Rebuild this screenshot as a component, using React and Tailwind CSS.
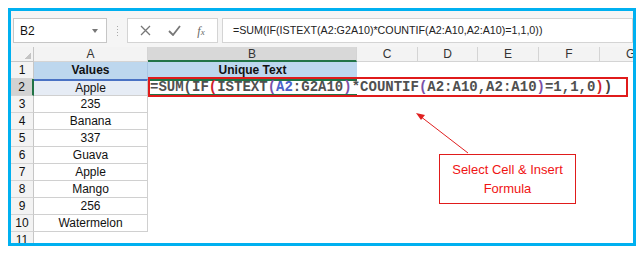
import React from 'react'

const cols = [
  { name: 'A', w: 'w-[114px]' },
  { name: 'B', w: 'w-[209px]' },
  { name: 'C', w: 'w-[61px]' },
  { name: 'D', w: 'w-[60px]' },
  { name: 'E', w: 'w-[61px]' },
  { name: 'F', w: 'w-[61px]' },
]

const values = ['235', 'Banana', '337', 'Guava', 'Apple', 'Mango', '256', 'Watermelon']

const RowHead = ({ n, active }) => (
  <div
    className={`w-[23px] shrink-0 text-center text-[12px] leading-[16px] border-b border-[#d4d4d4] ${active ? 'bg-[#d2d2d2] border-r-2 border-r-[#217346]' : 'bg-[#f3f3f3] border-r border-r-[#c6c6c6]'}`}
  >
    {n}
  </div>
)

// coloured parts of the formula being typed in B2
const formula = [
  ['=SUM(IF', 'text-[#505050]'],
  ['(', 'text-[#d0202a]'],
  ['ISTEXT', 'text-[#505050]'],
  ['(', 'text-[#7a4fa8]'],
  ['A2', 'text-[#4b62c8]'],
  [':G2A10', 'text-[#505050]'],
  [')', 'text-[#7a4fa8]'],
  ['*COUNTIF', 'text-[#505050]'],
  ['(', 'text-[#7a4fa8]'],
  ['A2:A10,A2:A10', 'text-[#505050]'],
  [')', 'text-[#7a4fa8]'],
  ['=1,1,0', 'text-[#505050]'],
  [')', 'text-[#d0202a]'],
  [')', 'text-[#404040]'],
]

export default function App() {
  return (
    <div className="w-[644px] h-[256px] bg-white p-2 font-['Liberation_Sans',Arial,sans-serif] text-[#111]">
      <div className="relative w-[628px] h-[238px] border-[3px] border-[#00b0f0] bg-white overflow-hidden flex flex-col">
        {/* Formula bar */}
        <div className="h-[36px] shrink-0 bg-[#f5f5f5] flex items-start pt-[7px] pl-[2px]">
          <div className="w-[94px] h-[25px] bg-white border border-[#c6c6c6] flex items-center justify-between pl-[6px] pr-[8px]">
            <span className="text-[12px]">B2</span>
            <span className="w-0 h-0 border-l-[3px] border-r-[3px] border-t-[4px] border-l-transparent border-r-transparent border-t-[#777]"></span>
          </div>
          <div className="w-[20px] h-[25px] flex flex-col items-center justify-center gap-[2px]">
            <span className="w-[1px] h-[1px] bg-[#aaa]"></span>
            <span className="w-[1px] h-[1px] bg-[#aaa]"></span>
            <span className="w-[1px] h-[1px] bg-[#aaa]"></span>
            <span className="w-[1px] h-[1px] bg-[#aaa]"></span>
          </div>
          <div className="w-[91px] h-[25px] bg-white border border-[#d4d4d4] flex items-center justify-around px-[4px]">
            <svg width="11" height="11" viewBox="0 0 11 11"><path d="M1 1 L10 10 M10 1 L1 10" stroke="#777" strokeWidth="1.3" /></svg>
            <svg width="13" height="11" viewBox="0 0 13 11"><path d="M1 6 L5 10 L12 1" stroke="#777" strokeWidth="1.8" fill="none" /></svg>
            <span className="text-[12px] italic text-[#666] font-['Liberation_Serif',serif]">f<span className="text-[9px]">x</span></span>
          </div>
          <div className="ml-[4px] flex-1 h-[25px] bg-white border border-[#d4d4d4] flex items-center pl-[10px] text-[10.7px] text-[#222] whitespace-nowrap">
            =SUM(IF(ISTEXT(A2:G2A10)*COUNTIF(A2:A10,A2:A10)=1,1,0))
          </div>
        </div>

        {/* Column headers */}
        <div className="h-[15px] shrink-0 flex bg-[#f3f3f3] text-[12px] leading-[14px] text-[#333]">
          <div className="w-[23px] shrink-0 border-r border-b border-[#c6c6c6] flex items-end justify-end p-[2px]">
            <span className="w-[7px] h-[7px] bg-[linear-gradient(135deg,transparent_50%,#c4c4c4_50%)]"></span>
          </div>
          {cols.map((c) => (
            <div
              key={c.name}
              className={`${c.w} shrink-0 text-center ${c.name === 'B' ? 'bg-[#d8d8d8] border-b-2 border-[#217346]' : 'border-b border-[#d4d4d4]'} border-r border-r-[#d4d4d4]`}
            >
              {c.name}
            </div>
          ))}
          <div className="flex-1 border-b border-[#d4d4d4] pl-[26px]">G</div>
        </div>

        {/* Row 1 */}
        <div className="h-[17px] shrink-0 flex text-[12px] leading-[16px]">
          <RowHead n="1" />
          <div className="w-[114px] shrink-0 bg-[#bdd7ee] text-center font-bold border-r border-[#a9c6e2]">Values</div>
          <div className="w-[209px] shrink-0 bg-[#bdd7ee] text-center font-bold">Unique Text</div>
          <div className="flex-1"></div>
        </div>

        {/* Row 2 */}
        <div className="h-[17px] shrink-0 flex text-[12px] leading-[15px]">
          <RowHead n="2" active />
          <div className="w-[114px] shrink-0 bg-[#e6ecf5] text-center border-t-2 border-t-[#4a72c4] border-r border-r-[#c6c6c6] border-b border-b-[#d0d0d0]">Apple</div>
          <div className="relative flex-1">
            <div className="absolute left-0 top-0 w-[209px] h-[17px] border-l-2 border-t-2 border-b-2 border-[#217346]"></div>
            <div className="absolute left-0 top-[-2px] w-[480px] h-[20px] border-2 border-[#e01b1b]"></div>
            <div className="absolute left-[2px] top-0 h-[17px] flex items-center whitespace-nowrap font-['Liberation_Mono',monospace] font-bold text-[14px]">
              {formula.map(([t, cls], i) => (
                <span key={i} className={cls}>{t}</span>
              ))}
            </div>
          </div>
        </div>

        {/* Rows 3 - 10 */}
        {values.map((v, i) => (
          <div key={i} className="h-[17px] shrink-0 flex text-[12px] leading-[16px]">
            <RowHead n={i + 3} />
            <div className="w-[114px] shrink-0 text-center border-r border-b border-[#d0d0d0]">{v}</div>
            <div className="flex-1"></div>
          </div>
        ))}

        {/* Row 11 */}
        <div className="h-[17px] shrink-0 flex text-[12px] leading-[16px]">
          <RowHead n="11" />
          <div className="flex-1"></div>
        </div>

        {/* Callout */}
        <svg className="absolute left-0 top-0 pointer-events-none" width="622" height="232">
          <line x1="457" y1="142" x2="409" y2="105" stroke="#e02020" strokeWidth="1" />
          <path d="M405 102 L414 104 L410 109 Z" fill="#e02020" />
        </svg>
        <div className="absolute left-[428px] top-[143px] w-[137px] h-[50px] border border-[#e01b1b] bg-white flex flex-col items-center justify-center text-[13px] leading-[19px] text-[#f01414] font-['Liberation_Sans',Arial,sans-serif]">
          <span>Select Cell &amp; Insert</span>
          <span>Formula</span>
        </div>
      </div>
    </div>
  )
}
